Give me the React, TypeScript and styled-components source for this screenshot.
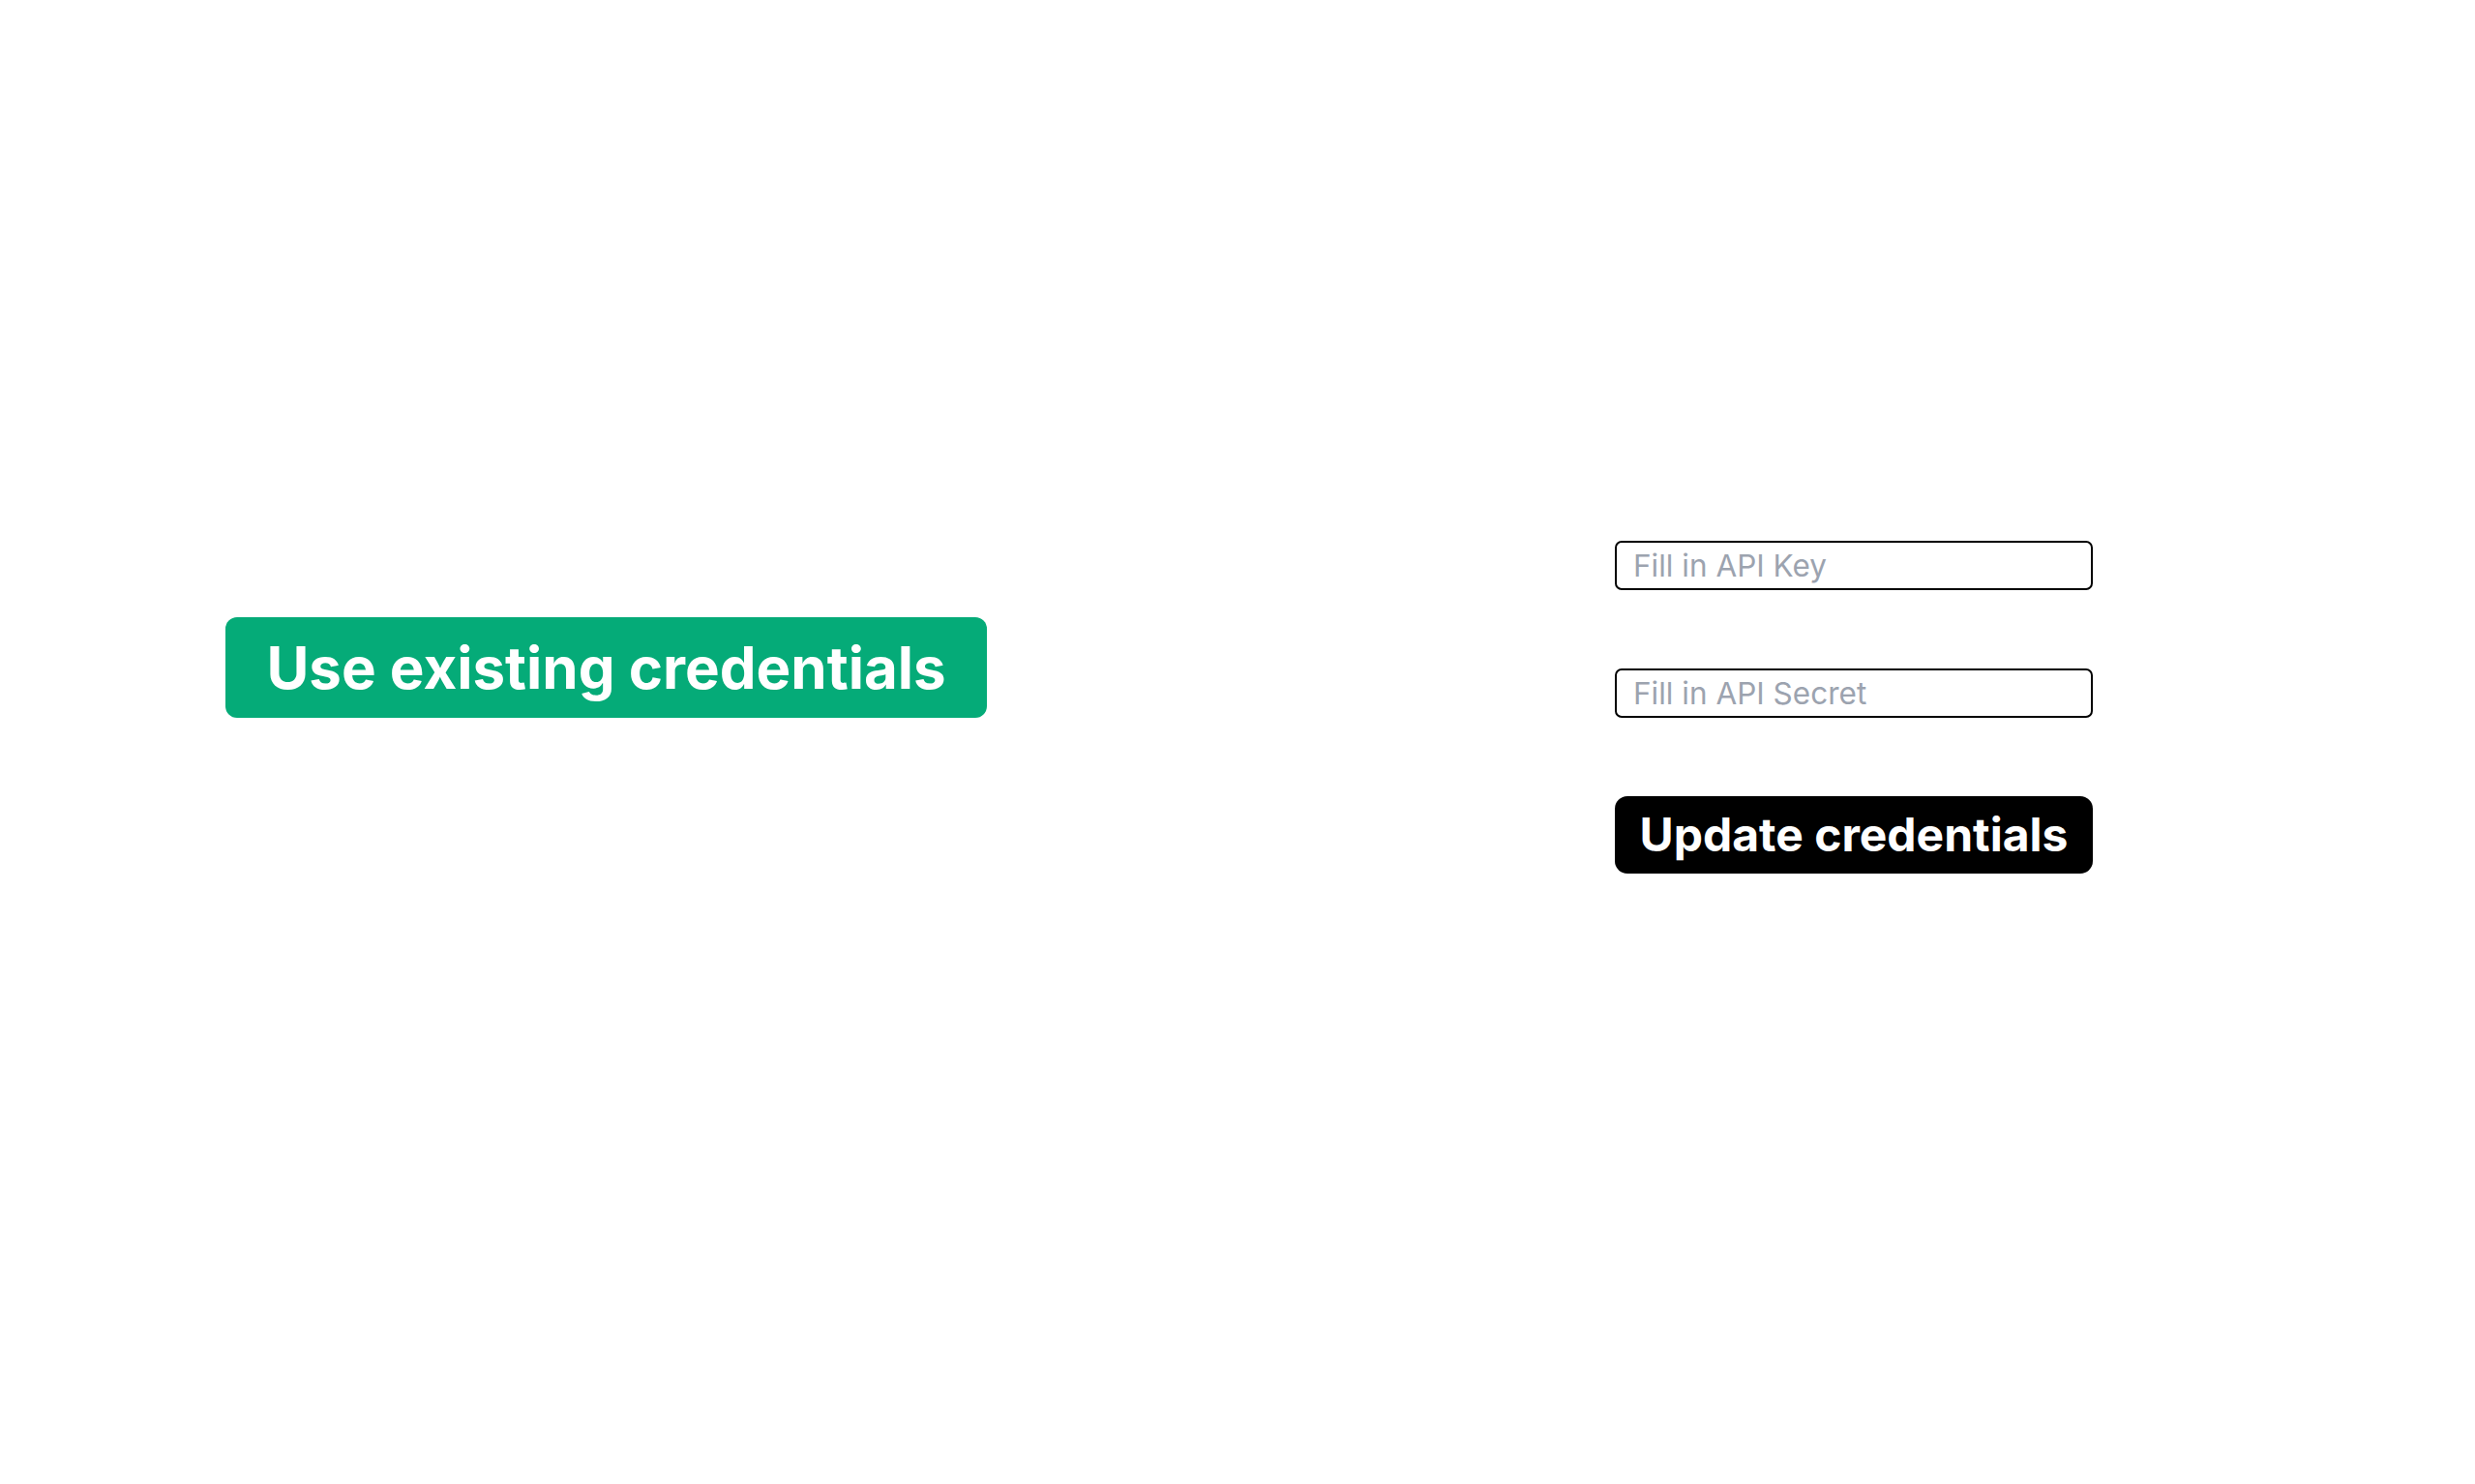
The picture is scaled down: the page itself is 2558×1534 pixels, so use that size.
import React from "react";
import styled, { createGlobalStyle } from "styled-components";

const Global = createGlobalStyle`
  html, body { margin: 0; padding: 0; background: #ffffff; }
  body { font-family: Inter, "Noto Sans", sans-serif; }
  * { box-sizing: border-box; }
`;

const Page = styled.main`
  min-height: 1534px;
  display: flex;
  flex-direction: row;
  align-items: flex-start;
  padding: 559px 0 0 233px;
`;

const PrimaryButton = styled.button`
  margin-top: 79px;
  width: 787px;
  height: 104px;
  padding: 0 40px;
  border: none;
  border-radius: 12px;
  background: #05ab78;
  color: #ffffff;
  font-family: Inter, sans-serif;
  font-weight: 700;
  font-size: 60px;
  line-height: 1;
  display: flex;
  align-items: center;
  justify-content: center;
  cursor: pointer;
`;

const Form = styled.form`
  margin-left: 649px;
  width: 494px;
  display: flex;
  flex-direction: column;
  gap: 81px;
`;

const Field = styled.input`
  width: 100%;
  height: 51px;
  padding: 0 17px;
  border: 2px solid #000000;
  border-radius: 7px;
  font-family: Inter, sans-serif;
  font-size: 31.5px;
  color: #111827;
  background: #ffffff;
  outline: none;
  &::placeholder { color: #9ca3af; }
`;

const SubmitButton = styled.button`
  width: 100%;
  height: 80px;
  border: none;
  border-radius: 13px;
  background: #000000;
  color: #ffffff;
  font-family: Inter, sans-serif;
  font-weight: 700;
  font-size: 48px;
  line-height: 1;
  display: flex;
  align-items: center;
  justify-content: center;
  cursor: pointer;
`;

export default function App() {
  return (
    <>
      <Global />
      <Page>
        <PrimaryButton type="button">Use existing credentials</PrimaryButton>
        <Form onSubmit={(e) => e.preventDefault()}>
          <Field type="text" placeholder="Fill in API Key" />
          <Field type="text" placeholder="Fill in API Secret" />
          <SubmitButton type="submit">Update credentials</SubmitButton>
        </Form>
      </Page>
    </>
  );
}
